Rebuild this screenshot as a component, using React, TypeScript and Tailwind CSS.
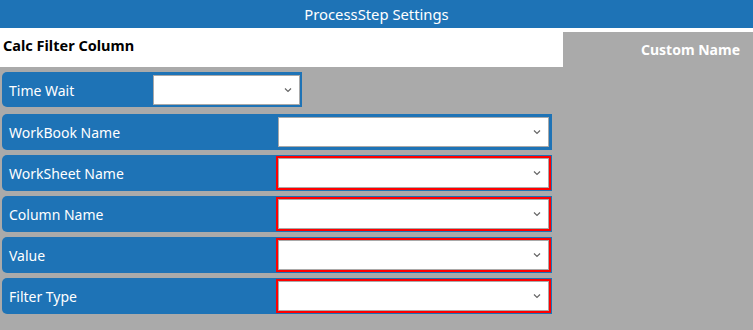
import React from "react";

const Chevron = () => (
  <svg width="8" height="5" viewBox="0 0 8 5" className="absolute right-[7px] top-1/2 -translate-y-1/2">
    <path d="M1 1 L4 4 L7 1" fill="none" stroke="#666" strokeWidth="1.2" />
  </svg>
);

const Select = ({ red, w }: { red?: boolean; w: string }) => (
  <div className={`${w} h-[34px] ${red ? "border-2 border-[#ff0000]" : "border-2 border-transparent"} flex`}>
    <div className="relative flex-1 bg-white border border-[#a9a9a9]">
      <Chevron />
    </div>
  </div>
);

const Row = ({ label, red }: { label: string; red?: boolean }) => (
  <div className="flex items-center h-[36px] w-[550px] bg-[#1e73b6] rounded-l-[5px] pl-[7px] pr-[1px]">
    <span className="flex-1 text-white text-[14px] leading-none pt-[2px]">{label}</span>
    <Select red={red} w="w-[275px]" />
  </div>
);

export default function App() {
  return (
    <div className="w-[753px] h-[330px] bg-[#aaaaaa] flex flex-col" style={{ fontFamily: '"Segoe UI", "Noto Sans", sans-serif' }}>
      <div className="h-[28px] bg-[#1e73b6] flex items-center justify-center text-white text-[14.8px]">
        ProcessStep Settings
      </div>
      <div className="flex flex-1">
        <div className="w-[563px] flex flex-col">
          <div className="h-[39px] bg-white flex items-center pl-[3px] pb-[3px] text-black text-[14.5px] font-bold">
            Calc Filter Column
          </div>
          <div className="flex flex-col gap-[5px] pl-[2px] pt-[5px]">
            <div className="flex items-center h-[35px] w-[300px] bg-[#1e73b6] rounded-l-[5px] pl-[7px] pr-[1px] mb-[2px]">
              <span className="flex-1 text-white text-[14px] leading-none pt-[2px]">Time Wait</span>
              <div className="relative w-[147px] h-[30px] bg-white border border-[#a9a9a9] mr-[1px]">
                <Chevron />
              </div>
            </div>
            <Row label="WorkBook Name" />
            <Row label="WorkSheet Name" red />
            <Row label="Column Name" red />
            <Row label="Value" red />
            <Row label="Filter Type" red />
          </div>
        </div>
        <div className="flex-1 border-t-4 border-white bg-[#aaaaaa] flex justify-end pr-[13px] pt-[11px]">
          <span className="text-white font-bold text-[14px] leading-none h-[20px]">Custom Name</span>
        </div>
      </div>
    </div>
  );
}
